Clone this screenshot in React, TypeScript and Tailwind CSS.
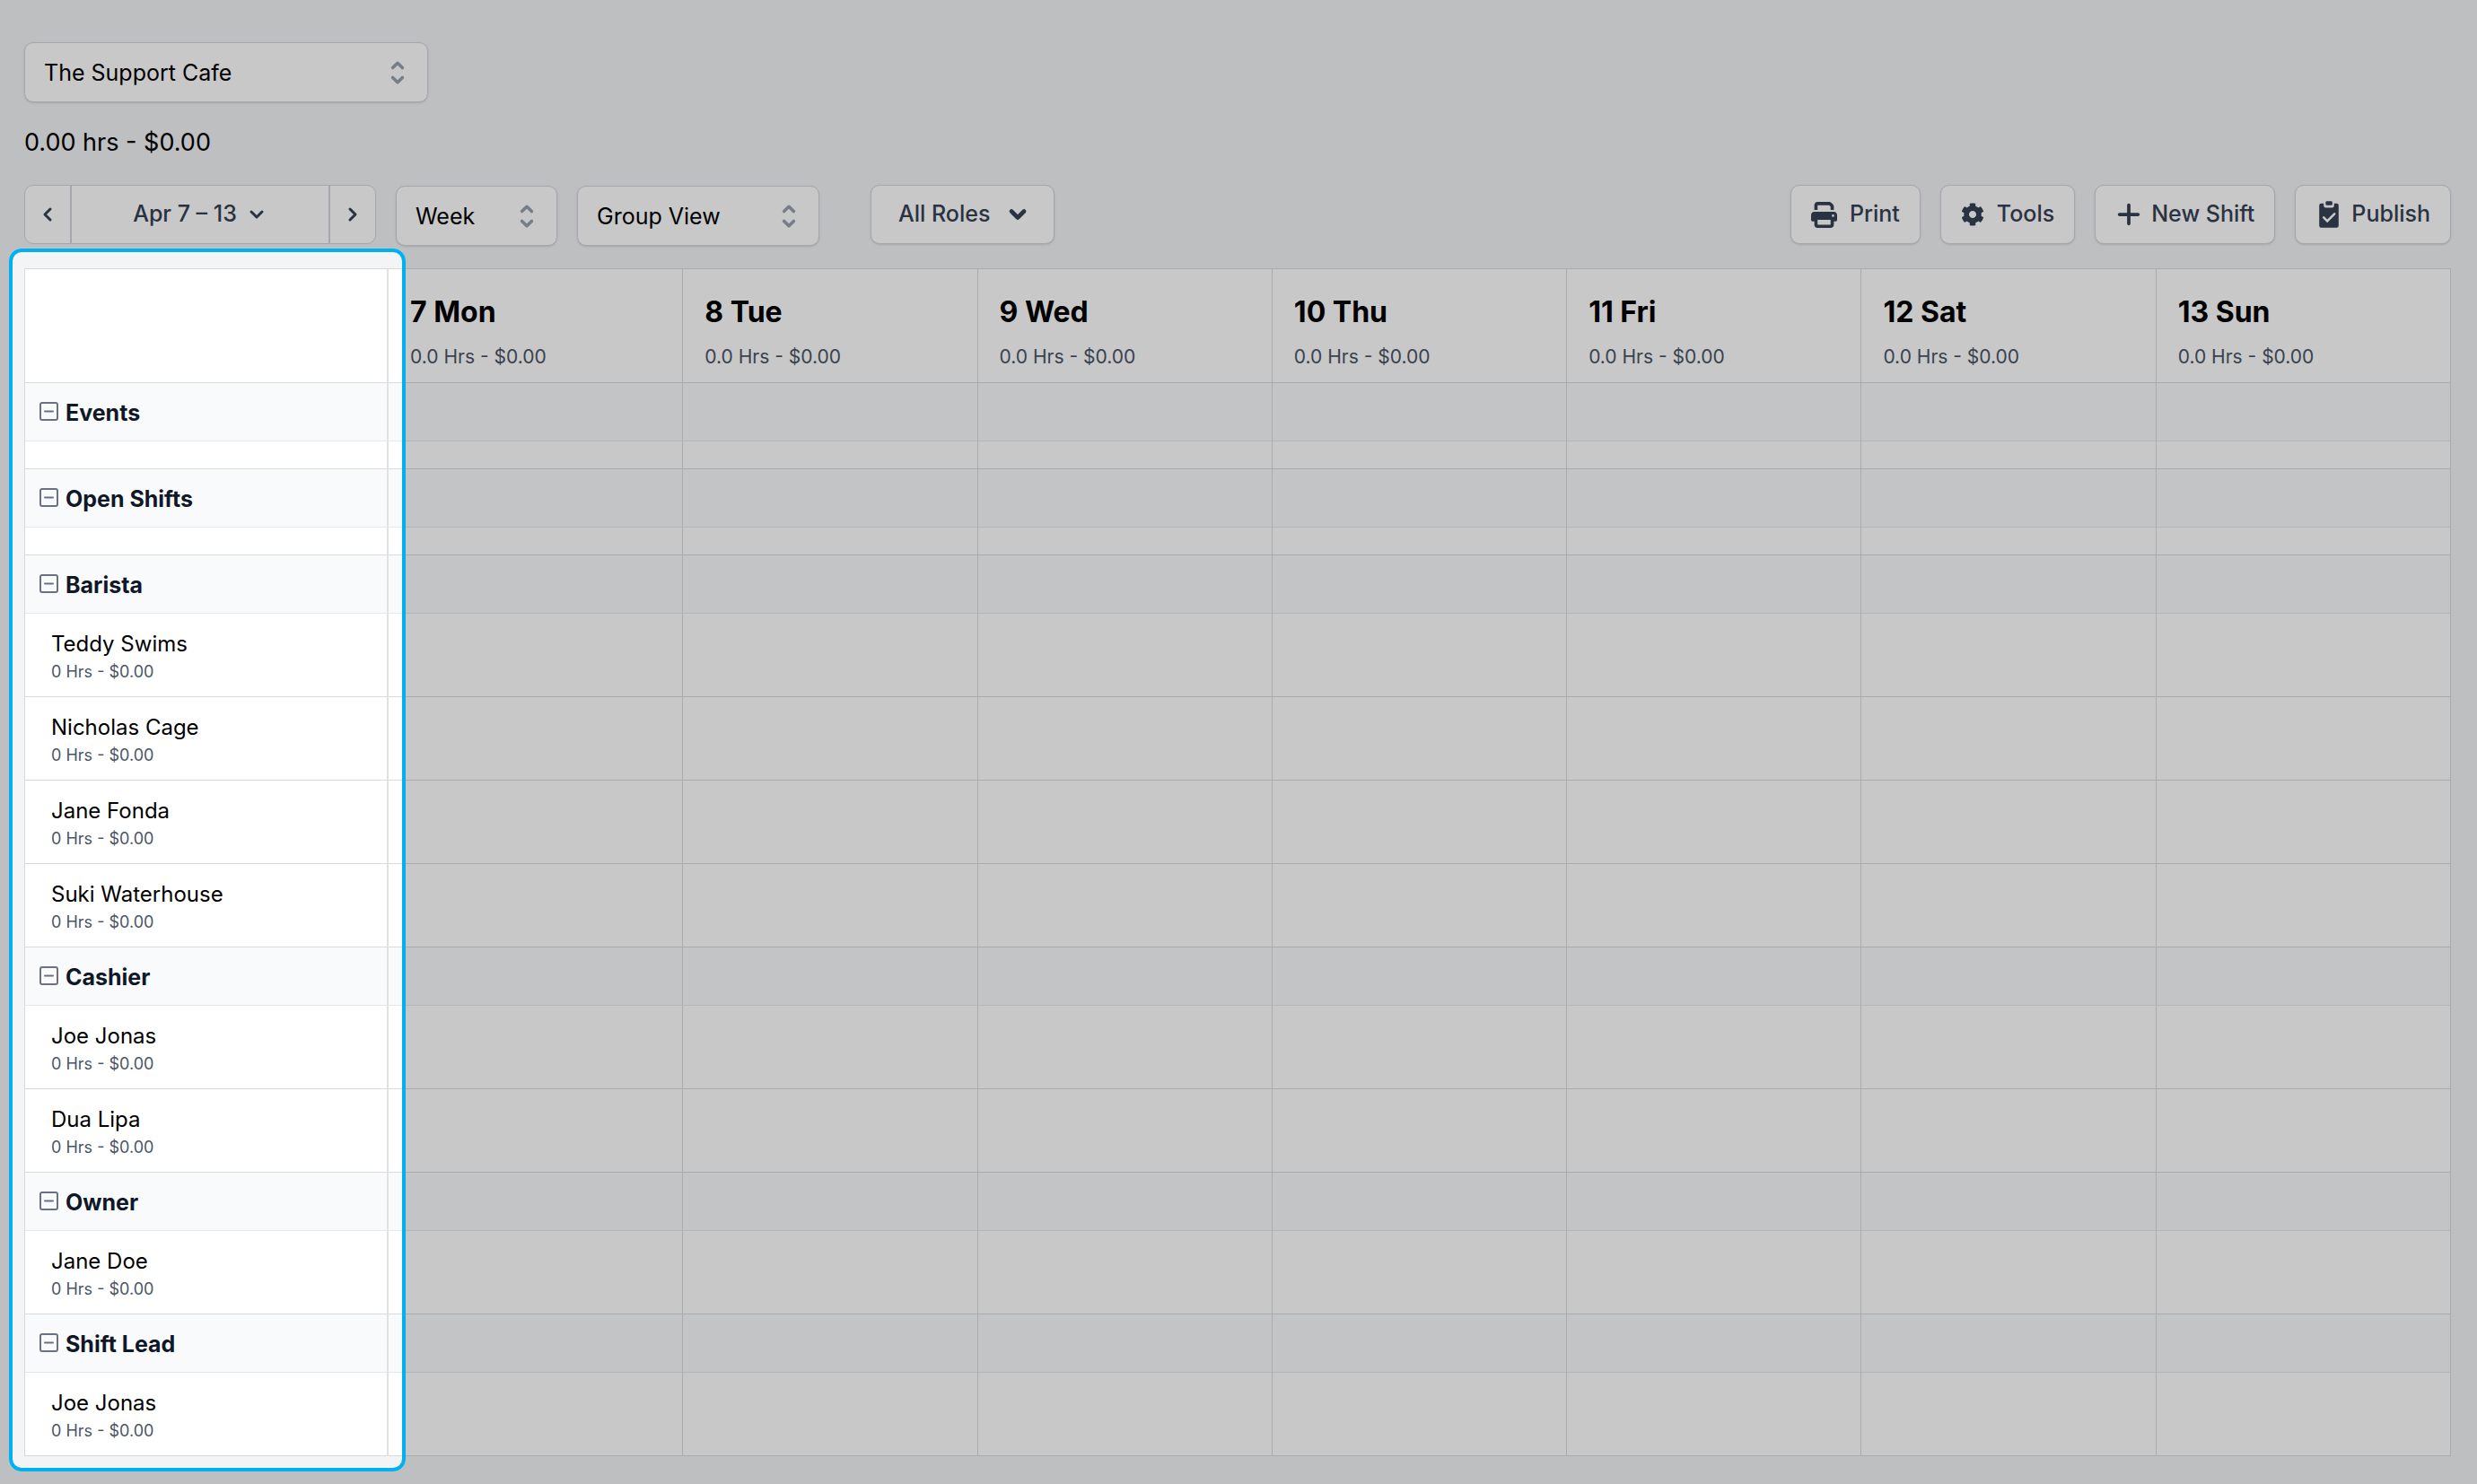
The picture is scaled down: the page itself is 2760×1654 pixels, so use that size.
import { ChevronDown, ChevronLeft, ChevronRight } from 'lucide-react'
import { FaCog } from 'react-icons/fa'
import { FaPlus, FaPrint } from 'react-icons/fa6'

const days = ['7 Mon', '8 Tue', '9 Wed', '10 Thu', '11 Fri', '12 Sat', '13 Sun']

const groups = [
  { name: 'Events', people: [], spacer: true },
  { name: 'Open Shifts', people: [], spacer: true },
  { name: 'Barista', people: ['Teddy Swims', 'Nicholas Cage', 'Jane Fonda', 'Suki Waterhouse'] },
  { name: 'Cashier', people: ['Joe Jonas', 'Dua Lipa'] },
  { name: 'Owner', people: ['Jane Doe'] },
  { name: 'Shift Lead', people: ['Joe Jonas'] },
]

const button =
  'flex h-[66px] items-center rounded-[10px] border border-gray-300 bg-white text-[25px] font-medium text-gray-700 shadow-sm'

function SelectBox({ label, value, className }: { label: string; value: string; className: string }) {
  return (
    <div className={`relative pt-px ${className}`}>
      <select
        aria-label={label}
        className="block h-[67px] w-full appearance-none rounded-[10px] border border-gray-300 bg-white pl-[21px] pr-14 pt-[2px] text-[25px] text-black shadow-sm"
      >
        <option>{value}</option>
      </select>
      <svg
        viewBox="0 0 20 20"
        className="pointer-events-none absolute right-4 top-[17px] size-9 fill-gray-400"
        aria-hidden="true"
      >
        <path
          fillRule="evenodd"
          clipRule="evenodd"
          d="M10 3a1 1 0 01.707.293l3 3a1 1 0 01-1.414 1.414L10 5.414 7.707 7.707a1 1 0 01-1.414-1.414l3-3A1 1 0 0110 3zm-3.707 9.293a1 1 0 011.414 0L10 14.586l2.293-2.293a1 1 0 011.414 1.414l-3 3a1 1 0 01-1.414 0l-3-3a1 1 0 010-1.414z"
        />
      </svg>
    </div>
  )
}

function ClipboardIcon() {
  return (
    <svg viewBox="0 0 30 30" className="size-[30px]" fill="currentColor" aria-hidden="true">
      <rect x="11.4" y="0.2" width="7.400" height="4.600" rx="1.400" />
      <path d="M6.400 2.800h2.800v2.400a2.300 2.300 0 0 0 2.300 2.300h7a2.300 2.300 0 0 0 2.300-2.300V2.800h2.800a2.200 2.200 0 0 1 2.200 2.200v22.600a2.200 2.200 0 0 1-2.200 2.200H6.400a2.200 2.200 0 0 1-2.200-2.200V5a2.200 2.200 0 0 1 2.200-2.200z" />
      <path d="M9.200 18.300l4 4 8-8" className="fill-none stroke-white" strokeWidth="2.600" strokeLinecap="round" />
    </svg>
  )
}

function CollapseIcon() {
  return (
    <svg
      viewBox="0 0 21 21"
      className="mb-1 size-[21px] fill-none stroke-gray-500"
      strokeWidth="2"
      strokeLinecap="round"
      aria-hidden="true"
    >
      <rect x="1" y="1" width="19" height="19" rx="2" />
      <path d="M6 10.500h9" />
    </svg>
  )
}

function DayCells({ className = 'border-b-[#d9dadc]' }: { className?: string }) {
  return (
    <>
      {days.map((day) => (
        <td key={day} className={`border-b border-r border-r-[#d9dadc] ${className}`} />
      ))}
    </>
  )
}

export default function App() {
  return (
    <main className="relative min-h-screen overflow-hidden bg-gray-100 pb-[31px] pl-[27px] pr-[29px] pt-[46px] font-['Inter',sans-serif] text-black">
      <SelectBox label="Location" value="The Support Cafe" className="w-[450px]" />
      <p className="mt-[25px] text-[27px] leading-10">0.00 hrs - $0.00</p>

      <div className="mt-[27px] flex items-start justify-between">
        <div className="flex items-start">
          <div className="flex h-[66px] w-[392px] rounded-[10px] border border-gray-300 bg-white text-gray-700">
            <button
              aria-label="Previous week"
              className="flex w-[52px] items-center justify-center border-r-2 border-gray-300"
            >
              <ChevronLeft className="size-6" strokeWidth={3} />
            </button>
            <button className="flex flex-1 items-center justify-center gap-[10px] text-[25px] font-medium">
              Apr 7 – 13
              <ChevronDown className="size-6" strokeWidth={3} />
            </button>
            <button
              aria-label="Next week"
              className="flex w-[52px] items-center justify-center border-l-2 border-gray-300"
            >
              <ChevronRight className="size-6" strokeWidth={3} />
            </button>
          </div>
          <SelectBox label="Range" value="Week" className="ml-[22px] w-[180px]" />
          <SelectBox label="View" value="Group View" className="ml-[22px] w-[270px]" />
          <button className={`${button} ml-[57px] gap-[17px] pl-[30px] pr-[26px]`}>
            All Roles
            <ChevronDown className="size-7" strokeWidth={4} />
          </button>
        </div>

        <div className="flex items-center gap-[22px]">
          <button className={`${button} gap-[14px] px-[22px]`}>
            <FaPrint className="size-[29px]" />
            Print
          </button>
          <button className={`${button} gap-[14px] px-[22px]`}>
            <FaCog className="size-[26px]" />
            Tools
          </button>
          <button className={`${button} gap-[10px] px-[22px]`}>
            <FaPlus className="size-[30px]" />
            New Shift
          </button>
          <button className={`${button} gap-[10px] px-[22px]`}>
            <ClipboardIcon />
            Publish
          </button>
        </div>
      </div>

      <table className="mt-[25px] w-full table-fixed border-separate border-spacing-0 border-l border-t border-[#d9dadc] bg-white text-left">
        <thead>
          <tr className="h-[127px]">
            <td className="w-[405px] border-b border-r-2 border-[#d9dadc] border-r-[#e1e1e3]" />
            {days.map((day) => (
              <th
                key={day}
                scope="col"
                className="border-b border-r border-[#d9dadc] px-6 pt-[14px] align-middle font-normal"
              >
                <div className="text-[32px] font-bold leading-10">{day}</div>
                <div className="mt-4 text-[21px] leading-7 text-gray-600">0.0 Hrs - $0.00</div>
              </th>
            ))}
          </tr>
        </thead>
        {groups.map((group) => (
          <tbody key={group.name}>
            <tr className="h-[65px] bg-gray-50">
              <th scope="rowgroup" className="border-b border-r-2 border-gray-200 border-r-[#e1e1e3] pl-4 pt-[3px]">
                <button className="flex items-center gap-2 text-[25px] font-bold text-gray-900">
                  <CollapseIcon />
                  {group.name}
                </button>
              </th>
              <DayCells className="border-b-gray-200" />
            </tr>
            {group.spacer && (
              <tr className="h-[31px]">
                <td className="border-b border-r-2 border-[#d9dadc] border-r-[#e1e1e3]" />
                <DayCells />
              </tr>
            )}
            {group.people.map((person) => (
              <tr key={person} className="h-[93px]">
                <th
                  scope="row"
                  className="border-b border-r-2 border-[#d9dadc] border-r-[#e1e1e3] pl-[29px] pt-[6px] font-normal"
                >
                  <div className="text-[24px] leading-8">{person}</div>
                  <div className="text-[18px] leading-[30px] text-gray-600">0 Hrs - $0.00</div>
                </th>
                <DayCells />
              </tr>
            ))}
          </tbody>
        ))}
      </table>

      {/* Spotlight around the team column, everything outside is dimmed */}
      <div className="pointer-events-none absolute bottom-[14px] left-[10px] top-[277px] w-[442px] rounded-[14px] border-4 border-[#00b0f0] shadow-[0_0_0_4000px_rgba(0,0,0,0.216)]" />
    </main>
  )
}
